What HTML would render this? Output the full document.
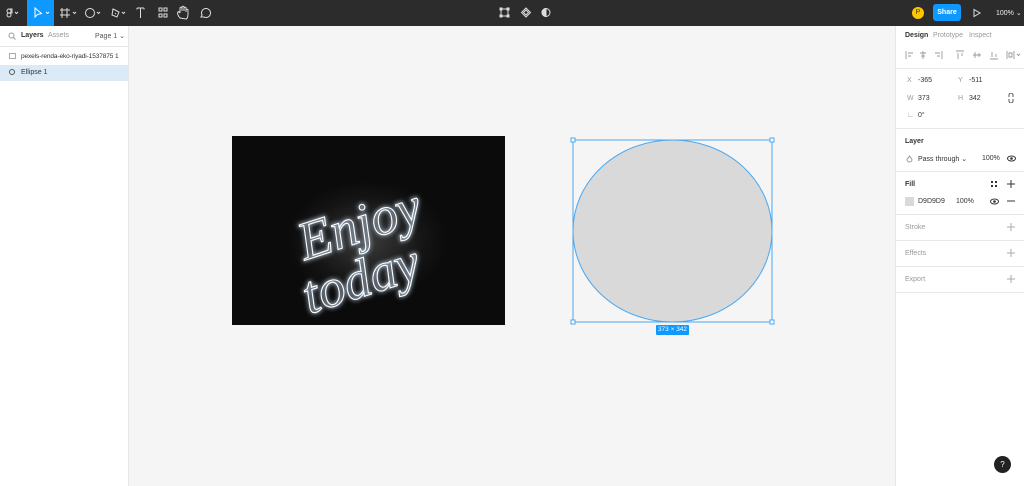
<!DOCTYPE html>
<html><head><meta charset="utf-8"><style>
*{margin:0;padding:0;box-sizing:border-box}
body{width:1024px;height:486px;overflow:hidden;background:#f5f5f5;font-family:"Liberation Sans",sans-serif;font-size:7px;color:#333;position:relative}
.top{position:absolute;left:0;top:0;width:1024px;height:26px;background:#2c2c2c}
.abs{position:absolute;white-space:nowrap}
.left{position:absolute;left:0;top:26px;width:129px;height:460px;background:#fff;border-right:1px solid #e5e5e5}
.right{position:absolute;left:895px;top:26px;width:129px;height:460px;background:#fff;border-left:1px solid #e5e5e5}
.sep{position:absolute;left:0;width:129px;height:1px;background:#e8e8e8}
.g{color:#999}
</style></head><body>
<div class="top">
 <div class="abs" style="left:27px;top:0;width:27px;height:26px;background:#0d99ff"></div>
 <svg class="abs" style="left:0;top:0" width="560" height="26" fill="none" stroke="#ddd" stroke-width="1">
  <circle cx="9" cy="11" r="2"/><circle cx="9" cy="15" r="2"/><path d="M9 9h3v4h-3M15 12l1.5 1.5L18 12"/>
  <path d="M35 8v9l2.5-2.5 4-1z" stroke="#fff"/><path d="M46 12l1.5 1.5L49 12" stroke="#fff"/>
  <path d="M62 8v10M67 8v10M60 10h10M60 15h10M73 12l1.5 1.5L76 12"/>
  <circle cx="90" cy="13" r="4.5"/><path d="M97 12l1.5 1.5L100 12"/>
  <path d="M113 9l6 3-2 5-5-2zM115 13l1 1M122 12l1.5 1.5L125 12"/>
  <path d="M137 8h7M140.5 8v10M137 8v1.5M144 8v1.5"/>
  <rect x="159" y="8" width="3" height="3"/><rect x="164" y="8" width="3" height="3"/><rect x="159" y="14" width="3" height="3"/><rect x="164" y="14" width="3" height="3"/>
  <path d="M180 18c-2-2-3-5-2-6s2 1 2 1v-5c0-1 2-1 2 0v3-4c0-1 2-1 2 0v4-3c0-1 2-1 2 0v4-2c0-1 2-1 2 0v4c0 3-1 5-2 5z"/>
  <path d="M201 17l1-2a4.5 4.5 0 1 1 2 2z"/>
  <rect x="501" y="9" width="7" height="7"/><rect x="500" y="8" width="2" height="2" fill="#ddd"/><rect x="507" y="8" width="2" height="2" fill="#ddd"/><rect x="500" y="15" width="2" height="2" fill="#ddd"/><rect x="507" y="15" width="2" height="2" fill="#ddd"/>
  <path d="M526 8l4.5 4.5-4.5 4.5-4.5-4.5zM526 10l2.5 2.5-2.5 2.5-2.5-2.5z"/>
  <circle cx="546" cy="12.5" r="4"/><path d="M546 8.5a4 4 0 0 0 0 8z" fill="#ddd"/>
 </svg>
 <div class="abs" style="left:912px;top:7px;width:12px;height:12px;border-radius:50%;background:#ffc700;color:#333;font-size:7px;text-align:center;line-height:12px">P</div>
 <div class="abs" style="left:933px;top:4px;width:28px;height:17px;border-radius:3px;background:#0d99ff;color:#fff;font-size:7px;font-weight:bold;text-align:center;line-height:17px">Share</div>
 <svg class="abs" style="left:972px;top:8px" width="10" height="10" fill="none" stroke="#ddd"><path d="M2 1.5v7l6-3.5z"/></svg>
 <div class="abs" style="left:996px;top:9px;color:#eee;font-size:7px">100% ⌄</div>
</div>
<div class="left">
 <svg class="abs" style="left:8px;top:6px" width="8" height="8" fill="none" stroke="#999"><circle cx="3.5" cy="3.5" r="2.5"/><path d="M5.5 5.5l2 2"/></svg>
 <div class="abs" style="left:21px;top:6px;font-weight:bold;color:#333">Layers</div>
 <div class="abs g" style="left:48px;top:6px">Assets</div>
 <div class="abs" style="left:95px;top:6px;color:#555">Page 1 ⌄</div>
 <div class="sep" style="top:20px"></div>
 <div class="abs" style="left:9px;top:27px;width:7px;height:6px;border:1px solid #aaa"></div>
 <div class="abs" style="left:21px;top:27px;font-size:6.5px;letter-spacing:-0.1px">pexels-renda-eko-riyadi-1537875 1</div>
 <div class="abs" style="left:0;top:39px;width:128px;height:16px;background:#daebf7"></div>
 <div class="abs" style="left:9px;top:43px;width:6px;height:6px;border:1px solid #555;border-radius:50%"></div>
 <div class="abs" style="left:21px;top:43px">Ellipse 1</div>
</div>
<div class="abs" style="left:232px;top:136px;width:273px;height:189px;background:radial-gradient(ellipse 80px 60px at 135px 105px,#3a3a3a,#151515 70%,#0b0b0b)"></div>
<svg class="abs" style="left:232px;top:136px" width="273" height="189">
 <defs><filter id="gl"><feGaussianBlur stdDeviation="2"/></filter></defs>
 <g font-family="Liberation Serif,serif" font-style="italic" font-size="54" fill="none" stroke="#fff">
  <text x="65" y="105" transform="rotate(-18 130 90)" filter="url(#gl)" stroke="#9ab" stroke-width="2.5">Enjoy</text>
  <text x="65" y="105" transform="rotate(-18 130 90)" stroke-width="1.1">Enjoy</text>
  <text x="68" y="160" transform="rotate(-18 130 140)" filter="url(#gl)" stroke="#9ab" stroke-width="2.5">today</text>
  <text x="68" y="160" transform="rotate(-18 130 140)" stroke-width="1.1">today</text>
 </g>
</svg>
<svg class="abs" style="left:560px;top:130px" width="230" height="210">
 <ellipse cx="112.5" cy="101" rx="99.5" ry="91" fill="#d9d9d9" stroke="#4aa8f0" stroke-width="1"/>
 <rect x="13" y="10" width="199" height="182" fill="none" stroke="#4aa8f0" stroke-width="1"/>
 <g fill="#fff" stroke="#4aa8f0"><rect x="11" y="8" width="4" height="4"/><rect x="210" y="8" width="4" height="4"/><rect x="11" y="190" width="4" height="4"/><rect x="210" y="190" width="4" height="4"/></g>
</svg>
<div class="abs" style="left:656px;top:325px;width:33px;height:10px;background:#0d99ff;color:#fff;font-size:6.5px;text-align:center;line-height:10px;border-radius:1px">373 × 342</div>
<div class="right">
 <div class="abs" style="left:9px;top:6px;font-weight:bold">Design</div>
 <div class="abs g" style="left:37px;top:6px">Prototype</div>
 <div class="abs g" style="left:73px;top:6px">Inspect</div>
 <svg class="abs" style="left:8px;top:23px" width="118" height="12" fill="none" stroke="#999" stroke-width="0.9">
  <path d="M2 2v8M4 4h5M4 7h3"/><path d="M19 2v8M16 4h6M17 7h4"/><path d="M38 2v8M31 4h5M33 7h3"/>
  <path d="M52 2h8M54 4v6M58 4v3"/><path d="M69 6h8M71 3v6M75 4v4"/><path d="M86 10h8M88 3v5M92 5v3"/>
  <path d="M103 2v8M110 2v8M105 4h3v4h-3zM113 5l1.5 1.5L116 5"/>
 </svg>
 <div class="sep" style="top:42px"></div>
 <div class="abs g" style="left:11px;top:51px">X</div><div class="abs" style="left:22px;top:51px">-365</div>
 <div class="abs g" style="left:62px;top:51px">Y</div><div class="abs" style="left:73px;top:51px">-511</div>
 <div class="abs g" style="left:11px;top:69px">W</div><div class="abs" style="left:22px;top:69px">373</div>
 <div class="abs g" style="left:62px;top:69px">H</div><div class="abs" style="left:73px;top:69px">342</div>
 <svg class="abs" style="left:112px;top:67px" width="6" height="10" fill="none" stroke="#555"><path d="M1 4V2a2 2 0 0 1 4 0v2M1 6v2a2 2 0 0 0 4 0V6"/></svg>
 <div class="abs g" style="left:11px;top:86px">∟</div><div class="abs" style="left:22px;top:86px">0°</div>
 <div class="sep" style="top:102px"></div>
 <div class="abs" style="left:9px;top:112px;font-weight:bold">Layer</div>
 <svg class="abs" style="left:10px;top:129px" width="7" height="8" fill="none" stroke="#999"><path d="M3.5 1L6 4.5a2.5 2.5 0 0 1-5 0z"/></svg>
 <div class="abs" style="left:22px;top:129px">Pass through ⌄</div>
 <div class="abs" style="left:86px;top:129px">100%</div>
 <svg class="abs" style="left:111px;top:129px" width="9" height="7"><ellipse cx="4.5" cy="3.5" rx="4" ry="2.5" fill="none" stroke="#333"/><circle cx="4.5" cy="3.5" r="1.3" fill="#333"/></svg>
 <div class="sep" style="top:145px"></div>
 <div class="abs" style="left:9px;top:155px;font-weight:bold">Fill</div>
 <svg class="abs" style="left:95px;top:155px" width="6" height="6" fill="#333"><rect x="0" y="0" width="2" height="2"/><rect x="4" y="0" width="2" height="2"/><rect x="0" y="4" width="2" height="2"/><rect x="4" y="4" width="2" height="2"/></svg>
 <svg class="abs" style="left:111px;top:154px" width="8" height="8" stroke="#333"><path d="M4 0v8M0 4h8"/></svg>
 <div class="abs" style="left:9px;top:171px;width:9px;height:9px;background:#d9d9d9"></div>
 <div class="abs" style="left:22px;top:172px">D9D9D9</div><div class="abs" style="left:60px;top:172px">100%</div>
 <svg class="abs" style="left:94px;top:172px" width="9" height="7"><ellipse cx="4.5" cy="3.5" rx="4" ry="2.5" fill="none" stroke="#333"/><circle cx="4.5" cy="3.5" r="1.3" fill="#333"/></svg>
 <svg class="abs" style="left:111px;top:171px" width="8" height="8" stroke="#333"><path d="M0 4h8"/></svg>
 <div class="sep" style="top:188px"></div>
 <div class="abs g" style="left:9px;top:198px">Stroke</div>
 <svg class="abs" style="left:111px;top:197px" width="8" height="8" stroke="#aaa"><path d="M4 0v8M0 4h8"/></svg>
 <div class="sep" style="top:214px"></div>
 <div class="abs g" style="left:9px;top:224px">Effects</div>
 <svg class="abs" style="left:111px;top:223px" width="8" height="8" stroke="#aaa"><path d="M4 0v8M0 4h8"/></svg>
 <div class="sep" style="top:240px"></div>
 <div class="abs g" style="left:9px;top:250px">Export</div>
 <svg class="abs" style="left:111px;top:249px" width="8" height="8" stroke="#aaa"><path d="M4 0v8M0 4h8"/></svg>
 <div class="sep" style="top:266px"></div>
</div>
<div class="abs" style="left:994px;top:456px;width:17px;height:17px;border-radius:50%;background:#222;color:#fff;font-size:8px;text-align:center;line-height:17px">?</div>
</body></html>
